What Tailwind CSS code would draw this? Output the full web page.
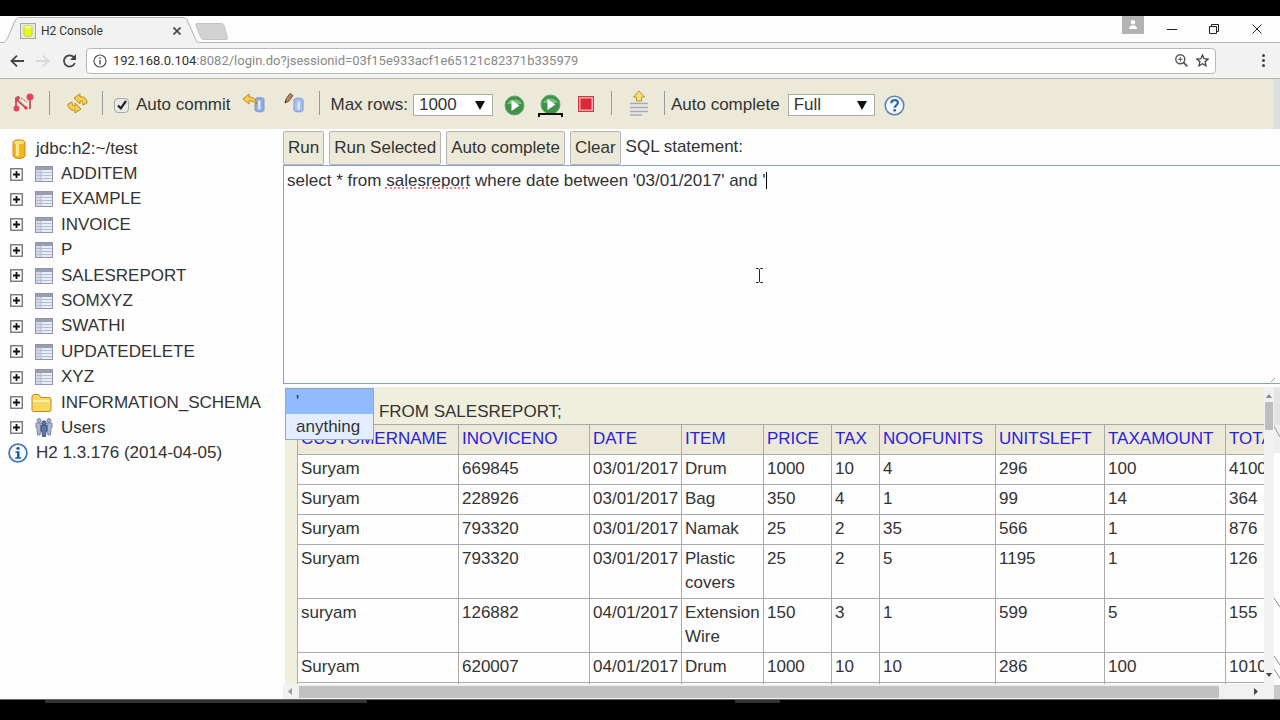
<!DOCTYPE html>
<html lang="en">
   <head>
      <meta charset="UTF-8" />
      <meta name="viewport" content="width=device-width, initial-scale=1.0" />
      <script src="https://cdn.jsdelivr.net/npm/@tailwindcss/browser@4"></script>
      <title>H2 Console</title>
   </head>

   <body class="flex h-screen flex-col overflow-hidden bg-black font-['Liberation_Sans',Arial,sans-serif] text-[17px] leading-6 text-[#333]">
      <!-- Shared icons -->
      <svg class="hidden">
         <symbol id="plus" viewBox="0 0 13 13">
            <rect x=".75" y=".75" width="11.5" height="11.5" fill="#fff" stroke="#777" stroke-width="1.4" />
            <path d="M3 6.5h7M6.5 3v7" stroke="#111" stroke-width="1.8" />
         </symbol>
         <symbol id="table" viewBox="0 0 18 16">
            <rect x=".5" y=".5" width="17" height="15" fill="#e9edf8" stroke="#8f94a8" />
            <path d="M1 1h16v3H1z" fill="#9a9eb0" />
            <path d="M1 4h5v11H1z" fill="#d3d9e8" />
            <path d="M1 6.5h16M1 9.5h16M1 12.5h16M6 4v11" stroke="#b7bdd0" />
         </symbol>
         <symbol id="arrow" viewBox="0 0 10 9">
            <path d="M0 0h10L5 9z" fill="#111" />
         </symbol>
      </svg>

      <!-- Tab strip -->
      <header class="mt-4 shrink-0 bg-[#fdfdfd] font-[Roboto,'Noto_Sans',sans-serif]">
         <div class="flex h-[27px] items-end border-b border-[#b8b8b8]">
            <div class="relative -mb-px flex h-[27px] w-[200px] items-center pl-5 pt-[2px]">
               <svg class="absolute inset-0" width="200" height="27" viewBox="0 0 200 27">
                  <path d="M0 27C5 27 6 25 8 21L15 5C17 1.500 18 1.500 21 1.500H182C186 1.500 187 3 188 6L196 24C197 26 198 27 200 27" fill="#f2f2f2" stroke="#b0b0b0" />
               </svg>
               <svg class="relative" width="16" height="16" viewBox="0 0 16 16">
                  <rect x=".5" y=".5" width="15" height="15" fill="#e6e9e0" stroke="#a4a89c" />
                  <path d="M4 4c0-2 8-2 8 0v8c0 2-8 2-8 0z" fill="#e4fb20" stroke="#c2cf3c" />
                  <ellipse cx="8" cy="4" rx="3.500" ry="1.200" fill="#f5ff9c" />
               </svg>
               <span class="relative ml-[5px] text-xs leading-5">H2 Console</span>
               <button class="relative ml-auto mr-[19px]" aria-label="Close tab">
                  <svg width="8" height="8" viewBox="0 0 8 8"><path d="M.5.5l7 7M7.500.5l-7 7" stroke="#444" stroke-width="1.600" /></svg>
               </button>
            </div>
            <button class="mb-[2px] -ml-[5px]" aria-label="New tab">
               <svg width="33" height="17" viewBox="0 0 33 17"><path d="M3 .5h23c2 0 2.500 1 3 2l3.500 12c.5 1.500 0 2-1.500 2H9c-2 0-2.500-1-3-2L1 3C.5 1 1 .5 3 .5z" fill="#d2d2d2" stroke="#c2c2c2" /></svg>
            </button>
            <div class="ml-auto flex items-start self-start">
               <button class="mr-[23px] flex h-[18px] w-[22px] justify-center bg-[#b3b3b3] pt-1" aria-label="Profile">
                  <svg width="10" height="9" viewBox="0 0 10 9" fill="#fff"><circle cx="5" cy="2.200" r="2.200" /><path d="M1 9c0-5 8-5 8 0z" /></svg>
               </button>
               <button class="mt-[13px] mr-[32px]" aria-label="Minimize">
                  <svg width="10" height="2" viewBox="0 0 10 2"><path d="M0 .5h10" stroke="#222" /></svg>
               </button>
               <button class="mt-2 mr-[33px]" aria-label="Restore">
                  <svg width="10" height="10" viewBox="0 0 10 10" fill="none" stroke="#222"><path d="M.5 2.500h7v7h-7zM2.500 2.500v-2h7v7h-2" /></svg>
               </button>
               <button class="mt-2 mr-[18px]" aria-label="Close">
                  <svg width="10" height="10" viewBox="0 0 10 10"><path d="M.5.5l9 9M9.500.5l-9 9" stroke="#222" /></svg>
               </button>
            </div>
         </div>

         <!-- Address bar -->
         <div class="flex h-9 items-center border-b border-[#b8b4aa] bg-[#f2f2f2]">
            <button class="ml-[10px]" aria-label="Back">
               <svg width="14" height="12" viewBox="0 0 14 12" fill="none" stroke="#444" stroke-width="1.800"><path d="M14 6H1.500M7 .7L1.500 6 7 11.300" /></svg>
            </button>
            <button class="ml-3" aria-label="Forward">
               <svg width="14" height="12" viewBox="0 0 14 12" fill="none" stroke="#d6d6d6" stroke-width="1.800"><path d="M0 6h12.500M7 .7L12.500 6 7 11.300" /></svg>
            </button>
            <button class="ml-3" aria-label="Reload">
               <svg width="15" height="14" viewBox="0 0 15 14" fill="none"><path d="M11.800 3.200A5.600 5.600 0 1 0 12.800 9" stroke="#444" stroke-width="1.800" /><path d="M14 0v6H8z" fill="#444" /></svg>
            </button>
            <div class="ml-[9px] flex h-[26px] flex-1 items-center rounded-sm border border-[#b8b8b8] bg-white px-[6px]">
               <svg width="14" height="14" viewBox="0 0 14 14" fill="none" stroke="#555"><circle cx="7" cy="7" r="6" stroke-width="1.200" /><path d="M7 6v4.500M7 3.300v1.500" stroke-width="1.500" /></svg>
               <div class="ml-[6px] text-[13px] leading-5 text-[#888]"><span class="text-[#333]">192.168.0.104</span>:8082/login.do?jsessionid=03f15e933acf1e65121c82371b335979</div>
               <button class="ml-auto" aria-label="Zoom">
                  <svg width="13" height="13" viewBox="0 0 13 13" fill="none" stroke="#555"><circle cx="5.300" cy="5.300" r="4.500" stroke-width="1.400" /><path d="M8.700 8.700L12.300 12.300" stroke-width="1.800" /><path d="M3 5.300h4.600M5.300 3v4.600" /></svg>
               </button>
               <button class="ml-2" aria-label="Bookmark">
                  <svg width="13" height="13" viewBox="0 0 13 13" fill="none" stroke="#444" stroke-width="1.300"><path d="M6.500 1l1.600 3.700 4 .4-3 2.700.9 4-3.500-2.100L3 11.800l.9-4-3-2.700 4-.4z" /></svg>
               </button>
            </div>
            <button class="ml-[46px] mr-[15px]" aria-label="Menu">
               <svg width="3" height="13" viewBox="0 0 3 13" fill="#444"><circle cx="1.500" cy="1.500" r="1.500" /><circle cx="1.500" cy="6.500" r="1.500" /><circle cx="1.500" cy="11.500" r="1.500" /></svg>
            </button>
         </div>
      </header>

      <!-- H2 toolbar -->
      <nav class="flex h-[50px] shrink-0 items-center border-r-[6px] border-[#dcdde0] bg-[#ece9d8] pl-[13px] pt-[2px]">
         <button class="mb-1" aria-label="Disconnect">
            <svg width="21" height="20" viewBox="0 0 21 20" fill="none"><path d="M3 16V6l10 9M17 5v11" stroke="#c9485c" stroke-width="1.800" /><path d="M8 5l6 4" stroke="#a55" stroke-dasharray="2 1" /><circle cx="3.500" cy="15.500" r="3" fill="#e2455c" /><circle cx="17" cy="4" r="3.500" fill="#e2455c" /><circle cx="13" cy="15" r="1.800" fill="#d04a5c" /><circle cx="5" cy="5" r="2" fill="#d04a5c" /></svg>
         </button>
         <span class="ml-[15px] mb-1 h-6 border-l border-[#999]"></span>
         <button class="ml-[17px] mb-1" aria-label="Refresh">
            <svg width="21" height="21" viewBox="0 0 21 21" fill="#f6cf52" stroke="#b88a20" stroke-linejoin="round"><path d="M7 5l6-4v3c4-1 7 2 7 6l-4 2c0-3-1-4-3-4v3z" /><path d="M14 16l-6 4v-3c-4 1-7-2-7-6l4-2c0 3 1 4 3 4v-3z" /></svg>
         </button>
         <span class="ml-[14px] mb-1 h-6 border-l border-[#999]"></span>
         <div class="relative ml-[11px] flex items-center">
            <input id="autocommit" type="checkbox" checked class="size-[15px] appearance-none rounded-sm border border-[#aaa] bg-[#e8e8e4]" />
            <svg class="pointer-events-none absolute left-[3px]" width="10" height="10" viewBox="0 0 10 10" fill="none" stroke="#222" stroke-width="2.200"><path d="M1 5.500L3.800 8.300 9 1" /></svg>
            <label for="autocommit" class="ml-[7px]">Auto commit</label>
         </div>
         <button class="ml-3 mb-[5px]" aria-label="Rollback">
            <svg width="24" height="20" viewBox="0 0 24 20" stroke-linejoin="round"><path d="M13 6.500c0-2.500 9-2.500 9 0V17c0 2.500-9 2.500-9 0z" fill="#8fabe2" stroke="#7f97cc" /><path d="M16 7.500h2.500v9H16z" fill="#dce8ff" /><path d="M1 6l6-5v3c4 0 7 2 8 7-3-3-5-3-8-3v3z" fill="#f6cf52" stroke="#b88a20" /></svg>
         </button>
         <button class="ml-[18px] mb-[5px]" aria-label="Commit">
            <svg width="20" height="20" viewBox="0 0 20 20"><path d="M10 7c0-2.500 9-2.500 9 0v10c0 2.500-9 2.500-9 0z" fill="#a5bfef" stroke="#7f97cc" /><path d="M13.500 8.500h2.500v8h-2.500z" fill="#dce8ff" /><path d="M1 10l1-4L6 .5l3 2L5 8z" fill="#b9855a" stroke="#76543a" /><path d="M1 10l.5-2L3 9z" fill="#222" /></svg>
         </button>
         <span class="ml-[15px] mb-1 h-6 border-l border-[#999]"></span>
         <label for="maxrows" class="ml-[10px]">Max rows:</label>
         <div class="relative ml-[5px] flex items-center">
            <select id="maxrows" class="h-[22px] w-20 appearance-none border border-[#aaa] bg-white pl-[5px] leading-5">
               <option>1000</option>
            </select>
            <svg class="pointer-events-none absolute right-2" width="10" height="9"><use href="#arrow" /></svg>
         </div>
         <button class="ml-[11px]" aria-label="Run">
            <svg width="21" height="21" viewBox="0 0 21 21"><circle cx="10.500" cy="10.500" r="9.500" fill="#3d9448" stroke="#6aa873" /><path d="M3 9a8 7 0 0 1 15 0z" fill="#7cbc80" /><path d="M7.500 5l8 5.500-8 5.500z" fill="#fff" /></svg>
         </button>
         <button class="ml-[13px] mt-[2px]" aria-label="Run selected">
            <svg width="25" height="24" viewBox="0 0 25 24"><circle cx="12.500" cy="10.500" r="9.500" fill="#3d9448" stroke="#6aa873" /><path d="M5 9a8 7 0 0 1 15 0z" fill="#7cbc80" /><path d="M9.500 5l8 5.500-8 5.500z" fill="#fff" /><path d="M1 23v-3h23v3" fill="none" stroke="#111" stroke-width="2" /></svg>
         </button>
         <button class="ml-[15px] mb-[3px]" aria-label="Stop">
            <svg width="16" height="16" viewBox="0 0 16 16"><rect x=".5" y=".5" width="15" height="15" fill="#f4a6a8" stroke="#c9383f" /><rect x="2.500" y="2.500" width="11" height="11" fill="#e0263a" /></svg>
         </button>
         <span class="ml-[17px] mb-1 h-6 border-l border-[#999]"></span>
         <button class="ml-[18px] mb-[5px]" aria-label="History">
            <svg width="18" height="26" viewBox="0 0 18 26"><path d="M9 1l5.500 6H11.500v4h-5V7h-3z" fill="#fbe078" stroke="#b8922c" stroke-linejoin="round" /><path d="M0 13.500h18M0 17.500h18M0 21.500h18M0 25h12" stroke="#a3a9c0" stroke-width="1.500" /></svg>
         </button>
         <span class="ml-4 mb-1 h-6 border-l border-[#999]"></span>
         <label for="autocomplete" class="ml-[6px]">Auto complete</label>
         <div class="relative ml-2 flex items-center">
            <select id="autocomplete" class="h-[22px] w-[87px] appearance-none border border-[#aaa] bg-white pl-[5px] leading-5">
               <option>Full</option>
            </select>
            <svg class="pointer-events-none absolute right-2" width="10" height="9"><use href="#arrow" /></svg>
         </div>
         <button class="ml-[9px]" aria-label="Help">
            <svg width="21" height="21" viewBox="0 0 21 21" fill="none"><circle cx="10.500" cy="10.500" r="9.300" fill="#f4f8ff" stroke="#5b85b8" stroke-width="1.600" /><path d="M7.300 8.300c0-4.300 6.600-4.200 6.600-.5 0 2.200-3.200 2.300-3.200 5" stroke="#2e64a8" stroke-width="2.200" /><circle cx="10.700" cy="15.300" r="1.400" fill="#2e64a8" /></svg>
         </button>
      </nav>

      <main class="flex min-h-0 flex-1 bg-[#fdfdfe]">
         <!-- Database tree -->
         <aside class="w-[283px] shrink-0 pt-[7px]">
            <ul class="grid h-[330px] auto-rows-fr [&>li]:flex [&>li]:items-center [&_a]:leading-6">
               <li class="pl-3">
                  <svg class="mr-[10px]" width="14" height="20" viewBox="0 0 14 20"><path d="M1 3.500C1 0 13 0 13 3.500v13c0 4-12 4-12 0z" fill="#f3b61f" stroke="#c98d1c" /><path d="M4 4h3v13H4z" fill="#ffe88a" /><ellipse cx="7" cy="3.500" rx="5" ry="1.800" fill="#ffe27a" /></svg>
                  <a href="#">jdbc:h2:~/test</a>
               </li>
               <li class="pl-[10px]"><svg class="mr-3" width="13" height="13"><use href="#plus" /></svg><svg class="mr-2" width="18" height="16"><use href="#table" /></svg><a href="#">ADDITEM</a></li>
               <li class="pl-[10px]"><svg class="mr-3" width="13" height="13"><use href="#plus" /></svg><svg class="mr-2" width="18" height="16"><use href="#table" /></svg><a href="#">EXAMPLE</a></li>
               <li class="pl-[10px]"><svg class="mr-3" width="13" height="13"><use href="#plus" /></svg><svg class="mr-2" width="18" height="16"><use href="#table" /></svg><a href="#">INVOICE</a></li>
               <li class="pl-[10px]"><svg class="mr-3" width="13" height="13"><use href="#plus" /></svg><svg class="mr-2" width="18" height="16"><use href="#table" /></svg><a href="#">P</a></li>
               <li class="pl-[10px]"><svg class="mr-3" width="13" height="13"><use href="#plus" /></svg><svg class="mr-2" width="18" height="16"><use href="#table" /></svg><a href="#">SALESREPORT</a></li>
               <li class="pl-[10px]"><svg class="mr-3" width="13" height="13"><use href="#plus" /></svg><svg class="mr-2" width="18" height="16"><use href="#table" /></svg><a href="#">SOMXYZ</a></li>
               <li class="pl-[10px]"><svg class="mr-3" width="13" height="13"><use href="#plus" /></svg><svg class="mr-2" width="18" height="16"><use href="#table" /></svg><a href="#">SWATHI</a></li>
               <li class="pl-[10px]"><svg class="mr-3" width="13" height="13"><use href="#plus" /></svg><svg class="mr-2" width="18" height="16"><use href="#table" /></svg><a href="#">UPDATEDELETE</a></li>
               <li class="pl-[10px]"><svg class="mr-3" width="13" height="13"><use href="#plus" /></svg><svg class="mr-2" width="18" height="16"><use href="#table" /></svg><a href="#">XYZ</a></li>
               <li class="pl-[10px]">
                  <svg class="mr-2" width="13" height="13"><use href="#plus" /></svg>
                  <svg class="mr-[9px]" width="21" height="18" viewBox="0 0 21 18"><path d="M1 15.500V3c0-2 1-2.500 2-2.500h4c1.500 0 2 1 2.500 3H18c1.500 0 2 .5 2 2v10c0 1.500-.5 2-2 2H3c-1.500 0-2-.5-2-2z" fill="#f8d75c" stroke="#b98c28" /><path d="M2 6h16v2H2z" fill="#fff0a8" /></svg>
                  <a href="#">INFORMATION_SCHEMA</a>
               </li>
               <li class="pl-[10px]">
                  <svg class="mr-3" width="13" height="13"><use href="#plus" /></svg>
                  <svg class="mr-2" width="18" height="19" viewBox="0 0 18 19"><g fill="#a9b5d0" stroke="#6a7796" stroke-width=".8"><circle cx="4" cy="2.500" r="2" /><path d="M1 5h5v6l-1 6H2.500L2 11 .8 9z" /><circle cx="14" cy="2.500" r="2" /><path d="M12 5h5l.2 4L16 11l-.5 6H13l-1-6z" /></g><g fill="#5f76a8" stroke="#33456c" stroke-width=".8"><circle cx="9" cy="5" r="2.200" /><path d="M6 7.500h6V13l-1 .5-.5 5h-3l-.5-5-1-.5z" /></g></svg>
                  <a href="#">Users</a>
               </li>
               <li class="pl-2">
                  <svg class="mr-2" width="20" height="20" viewBox="0 0 20 20"><circle cx="10" cy="10" r="8.900" fill="#f6faff" stroke="#3d7ab8" stroke-width="1.800" /><circle cx="10" cy="5.300" r="1.600" fill="#1f5c9e" /><path d="M7.500 8.300h4v6h1.500v1.500H7.300v-1.500H9V9.700H7.500z" fill="#1f5c9e" /></svg>
                  <span>H2 1.3.176 (2014-04-05)</span>
               </li>
            </ul>
         </aside>

         <section class="relative flex min-w-0 flex-1 flex-col">
            <!-- Query -->
            <div class="flex h-9 shrink-0 items-start gap-[5px] pt-[2px] [&>button]:h-[34px] [&>button]:rounded-xs [&>button]:border [&>button]:border-[#b5b5b5] [&>button]:bg-[#ece9d8] [&>button]:px-1">
               <button>Run</button>
               <button>Run Selected</button>
               <button>Auto complete</button>
               <button>Clear</button>
               <label for="sql" class="pt-1">SQL statement:</label>
            </div>
            <div class="relative h-[219px] shrink-0">
               <textarea id="sql" spellcheck="false" class="block h-full w-full resize-none border border-r-0 border-[#86a0d0] bg-[#fdfdff] px-[3px] py-[3px] leading-6 outline-none">select * from salesreport where date between '03/01/2017' and '</textarea>
               <span class="absolute left-[102px] top-[22px] w-[83px] border-b-2 border-dotted border-[#ee8080]"></span>
               <span class="absolute left-[483px] top-[7px] h-[17px] border-l border-black"></span>
               <svg class="absolute left-[473px] top-[103px]" width="7" height="15" viewBox="0 0 7 15" fill="none" stroke="#222"><path d="M0 .5h2.500l1 1 1-1H7M3.500 1.500v12M0 14.500h2.500l1-1 1 1H7" /></svg>
               <svg class="absolute bottom-[2px] right-[5px]" width="4" height="4" viewBox="0 0 4 4" stroke="#999"><path d="M0 4l4-4" /></svg>
            </div>

            <!-- Results -->
            <div class="mt-[3px] flex min-h-0 flex-1">
               <div class="flex min-w-0 flex-1 flex-col">
                  <div class="ml-[2px] min-h-0 flex-1 overflow-hidden bg-[#f0eedd] pl-3 pt-[13px]">
                     <div>SELECT * FROM SALESREPORT;</div>
                     <table class="w-[1000px] table-fixed border-collapse bg-[#fdfdfd] text-left [&_td]:border [&_td]:border-[#aaa] [&_td]:px-[3px] [&_td]:pt-[2px] [&_td]:pb-[3px] [&_td]:align-top [&_th]:border [&_th]:border-[#aaa] [&_th]:bg-[#ece9d8] [&_th]:px-[3px] [&_th]:pt-[2px] [&_th]:pb-[3px] [&_th]:font-normal [&_th]:text-[#2a20e0]">
                        <colgroup>
                           <col class="w-[161px]" /><col class="w-[131px]" /><col class="w-[92px]" /><col class="w-[82px]" /><col class="w-[68px]" /><col class="w-[48px]" /><col class="w-[116px]" /><col class="w-[109px]" /><col class="w-[121px]" /><col />
                        </colgroup>
                        <thead>
                           <tr><th>CUSTOMERNAME</th><th>INOVICENO</th><th>DATE</th><th>ITEM</th><th>PRICE</th><th>TAX</th><th>NOOFUNITS</th><th>UNITSLEFT</th><th>TAXAMOUNT</th><th>TOTAL</th></tr>
                        </thead>
                        <tbody>
                           <tr><td>Suryam</td><td>669845</td><td>03/01/2017</td><td>Drum</td><td>1000</td><td>10</td><td>4</td><td>296</td><td>100</td><td>4100</td></tr>
                           <tr><td>Suryam</td><td>228926</td><td>03/01/2017</td><td>Bag</td><td>350</td><td>4</td><td>1</td><td>99</td><td>14</td><td>364</td></tr>
                           <tr><td>Suryam</td><td>793320</td><td>03/01/2017</td><td>Namak</td><td>25</td><td>2</td><td>35</td><td>566</td><td>1</td><td>876</td></tr>
                           <tr><td>Suryam</td><td>793320</td><td>03/01/2017</td><td>Plastic covers</td><td>25</td><td>2</td><td>5</td><td>1195</td><td>1</td><td>126</td></tr>
                           <tr><td>suryam</td><td>126882</td><td>04/01/2017</td><td>Extension Wire</td><td>150</td><td>3</td><td>1</td><td>599</td><td>5</td><td>155</td></tr>
                           <tr><td>Suryam</td><td>620007</td><td>04/01/2017</td><td>Drum</td><td>1000</td><td>10</td><td>10</td><td>286</td><td>100</td><td>1010</td></tr>
                           <tr><td>&nbsp;</td><td></td><td></td><td></td><td></td><td></td><td></td><td></td><td></td><td></td></tr>
                        </tbody>
                     </table>
                  </div>
                  <!-- Horizontal scrollbar -->
                  <div class="flex h-[15px] shrink-0 items-center justify-between bg-[#f1f1f1] pl-[5px] pr-[6px]">
                     <svg width="4" height="7" viewBox="0 0 4 7"><path d="M4 0v7L0 3.500z" fill="#999" /></svg>
                     <div class="ml-[7px] mr-[35px] h-3 flex-1 bg-[#c1c1c1]"></div>
                     <svg width="4" height="7" viewBox="0 0 4 7"><path d="M0 0v7l4-3.500z" fill="#444" /></svg>
                  </div>
               </div>
               <!-- Vertical scrollbar -->
               <div class="flex w-[10px] shrink-0 flex-col items-center bg-[#f1f1f1] pt-[7px] pb-[22px]">
                  <svg width="6" height="4" viewBox="0 0 6 4"><path d="M0 4h6L3 0z" fill="#888" /></svg>
                  <div class="mt-1 h-7 w-2 bg-[#bdbdbd]"></div>
                  <svg class="mt-auto" width="6" height="4" viewBox="0 0 6 4"><path d="M0 0h6L3 4z" fill="#444" /></svg>
               </div>
               <div class="flex w-[6px] shrink-0 flex-col bg-[#fdfdfd]">
                  <div class="h-[38px] bg-[#e4e4e4]"></div>
                  <svg width="6" height="28" viewBox="0 0 6 28"><path d="M0 0h6v28H0z" fill="#eee" /><path d="M0 1l6 11" stroke="#999" /></svg>
                  <svg class="mt-auto" width="6" height="88" viewBox="0 0 6 88" stroke="#888"><path d="M0 1l6 9M0 59l6 9M0 72l6 9" /></svg>
                  <div class="h-[14px] bg-[#c8c8c8]"></div>
               </div>
            </div>

            <!-- Auto complete popup -->
            <ul class="absolute left-[2px] top-[259px] w-[89px] border border-[#8fa5cc] bg-[#e3edff] [&>li]:h-[25px] [&>li]:px-[10px] [&>li]:pt-px">
               <li class="bg-[#90bbff]">'</li>
               <li>anything</li>
            </ul>
         </section>
      </main>

      <footer class="flex h-[21px] shrink-0 border-t border-[#666] bg-black">
         <div class="ml-[45px] h-[3px] w-[322px] bg-[#333]"></div>
         <div class="ml-[368px] h-[3px] w-[45px] bg-[#333]"></div>
      </footer>
   </body>
</html>
